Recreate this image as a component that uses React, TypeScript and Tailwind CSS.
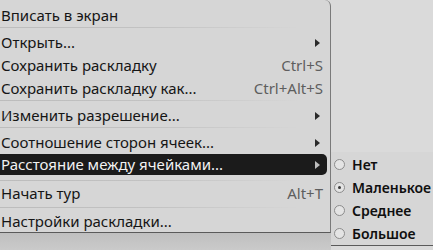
import React from "react";

type Item = {
  label: string;
  shortcut?: string;
  arrow?: boolean;
  active?: boolean;
  h: string;
};

function Arrow({ light }: { light?: boolean }) {
  return (
    <svg width="5" height="8" viewBox="0 0 5 8" className="shrink-0">
      <path d="M0 0 L5 4 L0 8 Z" fill={light ? "#bdbdbd" : "#2a2a2a"} />
    </svg>
  );
}

function Row({ item }: { item: Item }) {
  return (
    <div
      className={`flex items-center justify-between pl-[1px] ${item.h} ${
        item.active
          ? "mr-[3px] rounded-r-[5px] bg-[#1b1b1b] text-[#f2f2f2] pr-[7px]"
          : item.arrow
            ? "pr-[10px] text-[#151515]"
            : "pr-[7px] text-[#151515]"
      }`}
    >
      <span>{item.label}</span>
      {item.shortcut && <span className="text-[#5e5e5e]">{item.shortcut}</span>}
      {item.arrow && <Arrow light={item.active} />}
    </div>
  );
}

function Sep({ className }: { className: string }) {
  return (
    <div
      className={`h-px w-[300px] bg-gradient-to-r from-[#bcbcbc] via-[#c2c2c2] to-transparent ${className}`}
    />
  );
}

function Radio({ label, checked }: { label: string; checked?: boolean }) {
  return (
    <div className="flex h-[23px] items-center pl-[3px]">
      <span className="flex h-[11px] w-[11px] items-center justify-center rounded-full border border-[#8c8c8c] bg-[#e4e4e4]">
        {checked && <span className="h-[3px] w-[3px] rounded-full bg-[#3a3a3a]" />}
      </span>
      <span className="ml-[7px] text-[14px] font-semibold text-[#0f0f0f]">{label}</span>
    </div>
  );
}

export default function App() {
  return (
    <div className="relative h-[250px] w-[433px] overflow-hidden bg-[#dadada] font-['Noto_Sans',sans-serif] text-[15px] leading-none">
      <div className="flex flex-col">
        <div className="w-[331px] rounded-tr-[6px] border-r border-b border-r-[#7a7a7a] border-b-[#5a5a5a] bg-[#d6d6d6] pt-[4px]">
          <Row item={{ label: "Вписать в экран", h: "h-[23px]" }} />
          <Sep className="mb-[3px]" />
          <Row item={{ label: "Открыть...", arrow: true, h: "h-[23px]" }} />
          <Row item={{ label: "Сохранить раскладку", shortcut: "Ctrl+S", h: "h-[23px]" }} />
          <Row item={{ label: "Сохранить раскладку как...", shortcut: "Ctrl+Alt+S", h: "h-[23px]" }} />
          <Sep className="mb-[3px]" />
          <Row item={{ label: "Изменить разрешение...", arrow: true, h: "h-[23px]" }} />
          <Sep className="mb-[3px]" />
          <Row item={{ label: "Соотношение сторон ячеек...", arrow: true, h: "h-[23px]" }} />
          <Row item={{ label: "Расстояние между ячейками...", arrow: true, active: true, h: "h-[21px]" }} />
          <Sep className="mt-[5px] mb-[1px]" />
          <Row item={{ label: "Начать тур", shortcut: "Alt+T", h: "h-[23px]" }} />
          <Sep className="mt-[2px] mb-[2px]" />
          <Row item={{ label: "Настройки раскладки...", h: "h-[22px]" }} />
        </div>
        <div className="h-[17px] w-[331px] bg-gradient-to-b from-[#bfbfbf] to-[#cacaca]" />
      </div>

      <div className="absolute left-[331px] top-[152px] w-[102px] border-b border-b-[#5a5a5a] bg-[#d6d6d6] pt-[1px]">
        <Radio label="Нет" />
        <Radio label="Маленькое" checked />
        <Radio label="Среднее" />
        <Radio label="Большое" />
      </div>
    </div>
  );
}
